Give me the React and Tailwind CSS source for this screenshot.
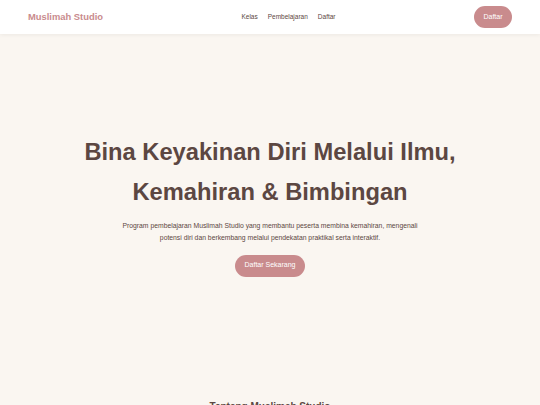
export default function App() {
  return (
    <div className="min-h-[405px] bg-[#faf6f1] text-[#5c4742]" style={{ fontFamily: '"Liberation Sans", Arial, sans-serif' }}>
      <header className="h-[34px] bg-white shadow-[0_1px_4px_rgba(0,0,0,0.06)] flex items-center justify-between pl-[28px] pr-[28px] relative z-10">
        <div className="text-[9.4px] font-bold text-[#c98b8d]">Muslimah Studio</div>
        <nav className="flex gap-[10px] text-[6.5px] text-[#5c4742]">
          <span>Kelas</span>
          <span>Pembelajaran</span>
          <span>Daftar</span>
        </nav>
        <button className="h-[22px] w-[38px] rounded-full bg-[#c98b8d] text-white text-[7px] flex items-center justify-center">Daftar</button>
      </header>
      <section className="h-[340px] flex flex-col items-center justify-center text-center">
        <h1 className="text-[23.7px] leading-[40px] font-bold text-[#5c4742]">
          Bina Keyakinan Diri Melalui Ilmu,<br />Kemahiran &amp; Bimbingan
        </h1>
        <p className="mt-[8px] max-w-[300px] text-[6.8px] leading-[12px] text-[#5c4742]">
          Program pembelajaran Muslimah Studio yang membantu peserta membina kemahiran, mengenali potensi diri dan berkembang melalui pendekatan praktikal serta interaktif.
        </p>
        <button className="mt-[11px] h-[22px] w-[70px] rounded-full bg-[#c98b8d] text-white text-[7px] flex items-center justify-center">Daftar Sekarang</button>
      </section>
      <section className="pt-[25px] text-center">
        <h2 className="text-[10px] font-bold text-[#5c4742]">Tentang Muslimah Studio</h2>
      </section>
    </div>
  );
}
